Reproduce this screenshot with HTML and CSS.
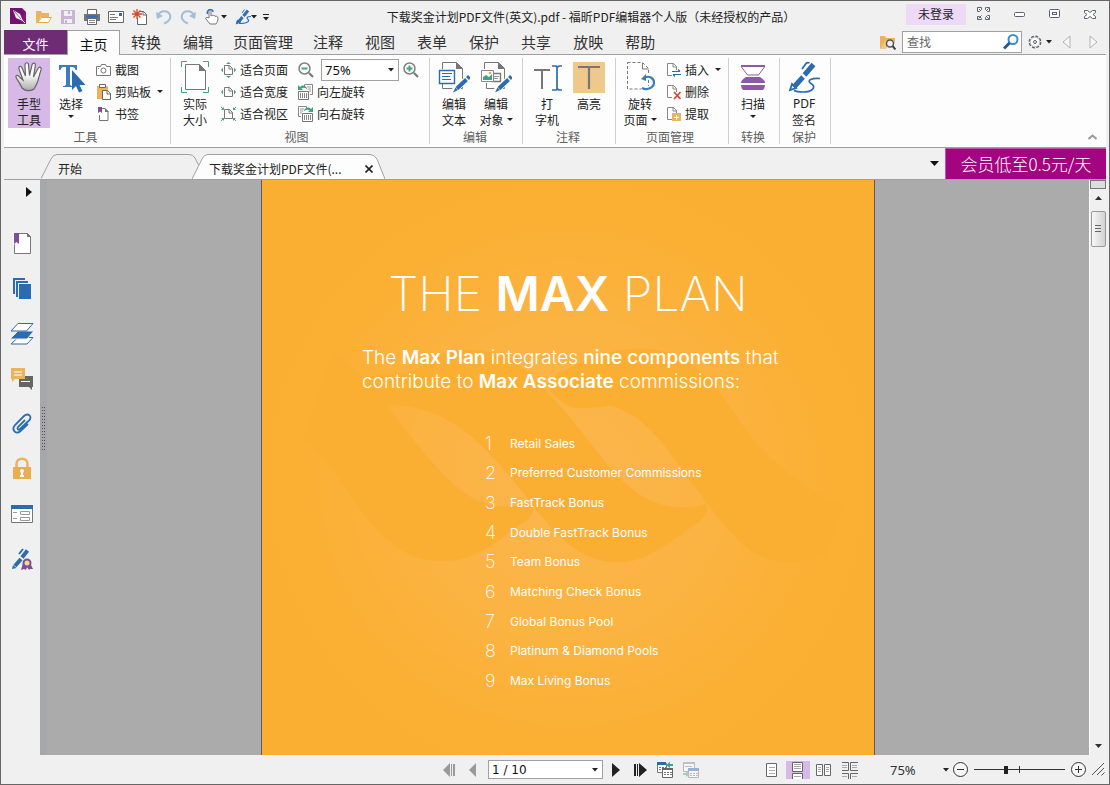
FILE: index.html
```html
<!DOCTYPE html>
<html lang="zh-CN">
<head>
<meta charset="utf-8">
<title>福昕PDF编辑器个人版</title>
<link rel="stylesheet" href="styles.css">
</head>
<body>
<div class="window">
  <header class="titlebar">
    <div class="quick">
      <svg class="logo" width="18" height="17" viewBox="0 0 18 17"><rect y="0" width="16" height="16" fill="#8a1285"/><path d="M0 0H16L10 16H0Z" fill="#74106f"/><path d="M12 0h4v4z" fill="#f3e3f3"/><path d="M3 2L10 6 13 13 6 10Z" fill="#fff"/><path d="M4 3L11 11" stroke="#74106f" stroke-width=".7"/><path d="M12 12l3 3" stroke="#fff"/></svg>
      <button aria-label="打开"><svg width="16" height="16" viewBox="0 0 16 16"><path d="M0 14V2h5l1 2h7v4H5L1 14Z" fill="#e9b45c"/><path d="M5.500 8.500H15.300L12.500 13.500H1.800Z" fill="#fff" stroke="#e9a93f"/></svg></button>
      <button aria-label="保存"><svg width="16" height="16" viewBox="0 0 16 16"><path d="M1 1h14v14H1z" fill="#c9b3d6"/><path d="M4 2h8v5H4z" fill="#f0f0f0"/><path d="M4 10h8v4H4z" fill="#f0f0f0"/><path d="M8 2h2v3H8zM5 11h2v3H5z" fill="#c9b3d6"/></svg></button>
      <button aria-label="打印"><svg width="16" height="16" viewBox="0 0 16 16"><path d="M3.500 5V.5h9V5" fill="#fff" stroke="#666"/><path d="M0 5h16v7H0z" fill="#777"/><path d="M2 6.500h12v2H2z" fill="#2e6db4"/><path d="M3.500 9.500h9v6h-9z" fill="#fff" stroke="#666"/><path d="M5 11.500h6M5 13.500h6" stroke="#888"/></svg></button>
      <button aria-label="邮件"><svg width="16" height="16" viewBox="0 0 16 16"><path d="M.5 2.500h15v11H.5z" fill="#fff" stroke="#666"/><path d="M11 4h3v3h-3z" fill="#2e6db4"/><path d="M2 5.500h5M2 8.500h8M2 10.500h6" stroke="#777"/></svg></button>
      <button aria-label="新建"><svg width="16" height="16" viewBox="0 0 16 16"><path d="M5.500 8.500v7h9V5.500l-3-3H8" fill="#fff" stroke="#666"/><path d="M11 2v4h4" fill="none" stroke="#666"/><path d="M5 0v10M0 5h10M1.500 1.500l7 7M8.500 1.500l-7 7" stroke="#cf4a2c" stroke-width="1.300"/></svg></button>
      <button aria-label="撤消"><svg width="16" height="16" viewBox="0 0 16 16"><path d="M2 6C5 1 12 1 14 6c1 4-2 7-6 8.500" fill="none" stroke="#a3bcda" stroke-width="2"/><path d="M0 3l1 7 6-3z" fill="#a3bcda"/></svg></button>
      <button aria-label="重做"><svg width="16" height="16" viewBox="0 0 16 16"><path d="M14 6C11 1 4 1 2 6c-1 4 2 7 6 8.500" fill="none" stroke="#a3bcda" stroke-width="2"/><path d="M16 3l-1 7-6-3z" fill="#a3bcda"/></svg></button>
      <button aria-label="触摸模式"><svg width="24" height="16" viewBox="0 0 24 16"><path d="M5 9V2c0-2 2-2 2 0v5c1-1 2-1 2 0 1-1 2-.5 2 .500 1-1 3 0 3 1.500 0 3-1 4-2 6H6L2 10c-1-1.500 1-2 3-1Z" fill="#fff" stroke="#777"/><path d="M3.500 5C2 0 9-1 9 3" fill="none" stroke="#2e6db4" stroke-width="1.400"/><path d="M17 6h6l-3 3.500z" fill="#222"/></svg></button>
      <button aria-label="签名"><svg width="24" height="16" viewBox="0 0 24 16"><path d="M12 1.500L7.500 7M6.500 8L3 12.500" stroke="#2e6db4" stroke-width="3"/><path d="M0 15l1.500-4 3 2zM6 4l2.500-3.500" stroke="#2e6db4" fill="#2e6db4"/><path d="M15 7.500c-4 0-5 1-3 3s-1 4-9 4" fill="none" stroke="#2e6db4" stroke-width="1.200"/><path d="M15 6h6l-3 3.500z" fill="#222"/></svg></button>
      <button class="custom" aria-label="自定义快速访问"><svg width="8" height="16" viewBox="0 0 8 16"><path d="M1 5.500h6" stroke="#222"/><path d="M1 8h6L4 11.500z" fill="#222"/></svg></button>
    </div>
    <h1 class="caption">下载奖金计划PDF文件(英文).pdf - 福昕PDF编辑器个人版（未经授权的产品）</h1>
    <button class="login">未登录</button>
    <div class="wincontrols">
      <button aria-label="全屏"><svg width="14" height="14" viewBox="0 0 14 14" fill="#fff" stroke="#5c6074"><path d="M.5.500h4v2l-2 2h-2zM2 2l2 2M9.500.500h3v4h-2l-2-2v-2zM.5 9.500h2l2 2v1h-4zM10.500 8.500h2v4h-4v-2zM9.500 3.500l2-2M1.500 11.500l3-3M9 9l3 3"/></svg></button>
      <button aria-label="最小化"><svg width="12" height="14" viewBox="0 0 12 14"><rect x=".5" y="5.500" width="10" height="4" rx="1" fill="#fff" stroke="#5c6074"/></svg></button>
      <button aria-label="还原"><svg width="12" height="14" viewBox="0 0 12 14" fill="#fff" stroke="#5c6074"><rect x=".5" y="2.500" width="10" height="8" rx="1"/><rect x="3.500" y="5.500" width="4" height="2"/></svg></button>
      <button aria-label="关闭"><svg width="12" height="14" viewBox="0 0 12 14"><path d="M.5 3.500h3l2.500 2 2.500-2h3v2L9 7.500l2.500 2v2h-3l-2.500-2-2.500 2h-3v-2l2.500-2-2.500-2z" fill="#fff" stroke="#5c6074"/></svg></button>
    </div>
  </header>

  <nav class="menu">
    <button class="file">文件</button>
    <button class="active">主页</button>
    <button>转换</button>
    <button>编辑</button>
    <button class="long">页面管理</button>
    <button>注释</button>
    <button>视图</button>
    <button>表单</button>
    <button>保护</button>
    <button>共享</button>
    <button>放映</button>
    <button>帮助</button>
    <div class="find">
      <button aria-label="搜索文件夹"><svg width="16" height="16" viewBox="0 0 16 16"><path d="M0 15V2h5l1 2h9v5l-4-3-5 1-4 6z" fill="#e9b45c"/><path d="M0 15L5 7h6l-5 8z" fill="#f0c684"/><circle cx="10" cy="9.500" r="3.500" fill="#eef" stroke="#555" stroke-width="1.500"/><path d="M12.500 12l3 3.500" stroke="#444" stroke-width="2"/></svg></button>
      <label class="searchbox"><input type="text" placeholder="查找" aria-label="查找"><svg width="16" height="16" viewBox="0 0 16 16"><circle cx="10" cy="5.500" r="4.500" fill="#fff" stroke="#3f8cc4" stroke-width="2"/><path d="M6.500 9L1 14.500" stroke="#2c5494" stroke-width="3"/></svg></label>
      <button aria-label="设置"><svg width="24" height="16" viewBox="0 0 24 16"><circle cx="7" cy="8" r="5.800" fill="#fff" stroke="#555a66" stroke-width="1.200" stroke-dasharray="3 1.500"/><circle cx="7" cy="8" r="4.800" fill="none" stroke="#888" stroke-width=".6"/><circle cx="7" cy="8" r="1.500" fill="none" stroke="#555a66"/><path d="M18 6h6l-3 3.500z" fill="#222"/></svg></button>
      <button class="step" aria-label="上一个"><svg width="9" height="14" viewBox="0 0 9 14"><path d="M8 1v12L1 7z" fill="#f7f7f7" stroke="#b3b3bb"/></svg></button>
      <button class="step" aria-label="下一个"><svg width="9" height="14" viewBox="0 0 9 14"><path d="M1 1v12l7-6z" fill="#f7f7f7" stroke="#b3b3bb"/></svg></button>
    </div>
  </nav>

  <div class="ribbon">
    <section class="group tools">
      <div class="items">
        <button class="big on"><svg width="32" height="32" viewBox="0 0 32 32"><defs><linearGradient id="palm" x2="0" y2="1"><stop offset=".4" stop-color="#fff"/><stop offset="1" stop-color="#aaa"/></linearGradient></defs><path d="M9 27C7 22 4 19 3 16c-.5-2 2-2.500 4 .500L10 19 6 8c-.8-3 2.200-3.500 3-1l3.500 8L12 4c0-3 3.500-3 3.500 0l1 10.500L19 4c.6-3 4-2 3.300.500L20.500 16 25 7.500c1.500-2.500 4-1 3 1.500C26 14 26 18 24 22c-1 3-2 4-3 6-3 2.500-9 2-12-1Z" fill="url(#palm)" stroke="#666" stroke-width="1.200"/></svg><span>手型</span><span>工具</span></button>
        <button class="big"><svg width="32" height="32" viewBox="0 0 32 32"><path d="M4 4h18v5h-1.500c-.5-2-1.500-3-3-3H15v17c0 1.500 1 2 3 2v1H8v-1c2 0 3-.5 3-2V6H8.500C7 6 6 7 5.500 9H4z" fill="#3b7cbd"/><path d="M17 9v20l4-4 3 6.500 3.500-1.500-3-6h6z" fill="#2b6bb0"/></svg><span>选择</span><svg class="arrow" width="6" height="10" viewBox="0 0 6 10"><path d="M0 3h6L3 6z" fill="#222"/></svg></button>
        <div class="stack">
          <button class="small"><svg width="15" height="16" viewBox="0 0 15 16"><path d="M.5 4.500h4l1-2h4l1 2h4v9H.5z" fill="#fff" stroke="#777"/><circle cx="7.500" cy="8.500" r="2.500" fill="none" stroke="#777"/><path d="M2 6.500h1" stroke="#777"/></svg>截图</button>
          <button class="small"><svg width="15" height="16" viewBox="0 0 15 16"><path d="M1 2h11v13H1z" fill="#e9b45c"/><path d="M3.500 0.500h6v3h-6z" fill="#fff" stroke="#666"/><path d="M6.500 6.500h5l3 3v6h-8z" fill="#fff" stroke="#666"/><path d="M11 6v4h4" fill="none" stroke="#666"/></svg>剪贴板<svg class="drop" width="6" height="10" viewBox="0 0 6 10"><path d="M0 3h6L3 6z" fill="#222"/></svg></button>
          <button class="small"><svg width="15" height="16" viewBox="0 0 15 16"><path d="M5 2.500h4l3 3v9H3.500V9" fill="#fff" stroke="#777"/><path d="M9 2l4 4H9z" fill="#777"/><path d="M2 1h4v6L4 5.500 2 7z" fill="#7d4d9a"/></svg>书签</button>
        </div>
      </div>
      <h2>工具</h2>
    </section>

    <section class="group view">
      <div class="items">
        <button class="big"><svg width="32" height="32" viewBox="0 0 32 32"><path d="M6.500 3.500h14l6 6v19h-20z" fill="#fff" stroke="#777"/><path d="M20 3l7 7h-7z" fill="#777"/><path d="M2.500 6V.5H8M24 .5h5.500V6M2.500 26v5.500H8M24 31.500h5.500V26" fill="none" stroke="#45a183"/></svg><span>实际</span><span>大小</span></button>
        <div class="stack">
          <button class="small"><svg width="15" height="16" viewBox="0 0 15 16"><path d="M3.500 3.500h5l3 3v6h-8z" fill="#fff" stroke="#777"/><path d="M8 3v4h4" fill="none" stroke="#777"/><path d="M5 2l2.500-2L10 2zM5 14l2.500 2 2.500-2zM2 5.500L0 8l2 2.500zM13 5.500L15 8l-2 2.500z" fill="#45a183"/></svg>适合页面</button>
          <button class="small"><svg width="15" height="16" viewBox="0 0 15 16"><path d="M3.500 3.500h5l3 3v6h-8z" fill="#fff" stroke="#777"/><path d="M8 3v4h4" fill="none" stroke="#777"/><path d="M2 5.500L0 8l2 2.500zM13 5.500L15 8l-2 2.500z" fill="#45a183"/></svg>适合宽度</button>
          <button class="small"><svg width="15" height="16" viewBox="0 0 15 16"><path d="M3.500 3.500h5l3 3v6h-8z" fill="#fff" stroke="#777"/><path d="M8 3v4h4" fill="none" stroke="#777"/><path d="M0 1l2.500 2.500M15 1l-2.500 2.500M0 15l2.500-2.500M15 15l-2.500-2.500M2.500 1.500v2H.5M12.500 1.500v2h2M2.500 14.500v-2H.5M12.500 14.500v-2h2" fill="none" stroke="#45a183"/></svg>适合视区</button>
        </div>
        <div class="stack second">
          <div class="zoomrow">
            <button aria-label="缩小"><svg width="16" height="16" viewBox="0 0 16 16"><circle cx="6.500" cy="6.500" r="5.500" fill="#fff" stroke="#808080" stroke-width="1.500"/><path d="M11 11l4 4" stroke="#777" stroke-width="2.200"/><path d="M3.500 6.500h6" stroke="#45a183" stroke-width="2"/></svg></button>
            <div class="combo zoombox"><select aria-label="缩放比例"><option>75%</option></select><svg width="6" height="4" viewBox="0 0 6 4"><path d="M0 0h6L3 3.500z" fill="#222"/></svg></div>
            <button aria-label="放大"><svg width="16" height="16" viewBox="0 0 16 16"><circle cx="6.500" cy="6.500" r="5.500" fill="#fff" stroke="#808080" stroke-width="1.500"/><path d="M11 11l4 4" stroke="#777" stroke-width="2.200"/><path d="M3.500 6.500h6M6.500 3.500v6" stroke="#45a183" stroke-width="2"/></svg></button>
          </div>
          <button class="small"><svg width="15" height="16" viewBox="0 0 15 16"><path d="M6.500 3V.5h8v10H12" fill="#fff" stroke="#888"/><path d="M9 3h4M10 5h3M11 7h2" stroke="#999"/><path d="M.5 7.500h10v8H.5z" fill="#fff" stroke="#777"/><path d="M2.500 9v5M4.500 9v5M6.500 9v5M8.500 9v5" stroke="#888"/><path d="M0 1v5h5L3.500 4.500C6 3 8 4 9.500 6 9 2 5 0 2 3z" fill="#45a183"/></svg>向左旋转</button>
          <button class="small"><svg width="15" height="16" viewBox="0 0 15 16"><path d="M8.500 3V.5h-8v10H3" fill="#fff" stroke="#888"/><path d="M2 3h4M2 5h3M2 7h2" stroke="#999"/><path d="M4.500 7.500h10v8h-10z" fill="#fff" stroke="#777"/><path d="M6.500 9v5M8.500 9v5M10.500 9v5M12.500 9v5" stroke="#888"/><path d="M15 1v5h-5l1.500-1.500C9 3 7 4 5.500 6 6 2 10 0 13 3z" fill="#45a183"/></svg>向右旋转</button>
        </div>
      </div>
      <h2>视图</h2>
    </section>

    <section class="group">
      <div class="items">
        <button class="big"><svg width="32" height="32" viewBox="0 0 32 32"><path d="M4.500 8V1.500h14l6 6v20h-20V22" fill="#fff" stroke="#777"/><path d="M18 1l7 7h-7z" fill="#777"/><path d="M1.500 9.500h15v13h-15z" fill="#fff" stroke="#2b6bb0" stroke-width="1.400"/><path d="M4 12.500h10M4 15.500h8M4 18.500h9" stroke="#2b6bb0"/><path d="M32 15L16 30" stroke="#fdfdfd" stroke-width="6"/><path d="M31.500 15.500L29.500 17.500M28.500 18.500L19 27.500" stroke="#2b6bb0" stroke-width="4"/><path d="M17.500 26.500l2.500 2.500-5 2.500z" fill="#2b6bb0"/></svg><span>编辑</span><span>文本</span></button>
        <button class="big"><svg width="32" height="32" viewBox="0 0 32 32"><path d="M4.500 8V1.500h14l6 6v20h-18V22" fill="#fff" stroke="#777"/><path d="M18 1l7 7h-7z" fill="#777"/><path d="M12.500 12.500h8v8h-8z" fill="#fff" stroke="#777" stroke-width="1.400"/><path d="M14 15.500h5M14 17.500h4" stroke="#999"/><path d="M1.500 9.500h12v11h-12z" fill="#fff" stroke="#888"/><path d="M3 19v-3l3-2 3 2 3-3v6z" fill="#45a183"/><circle cx="10" cy="12" r="1.300" fill="#e9a93f"/><path d="M32 15L16 30" stroke="#fdfdfd" stroke-width="6"/><path d="M31.500 15.500L29.500 17.500M28.500 18.500L19 27.500" stroke="#2b6bb0" stroke-width="4"/><path d="M17.500 26.500l2.500 2.500-5 2.500z" fill="#2b6bb0"/></svg><span>编辑</span><span class="witharrow">对象<svg width="6" height="6" viewBox="0 0 6 6"><path d="M0 1h6L3 4z" fill="#222"/></svg></span></button>
      </div>
      <h2>编辑</h2>
    </section>

    <section class="group">
      <div class="items">
        <button class="big"><svg width="32" height="32" viewBox="0 0 32 32"><path d="M3 9h16M11 9v19" stroke="#777" stroke-width="2"/><path d="M21 5h4l1.500 1L28 5h3M21 29h4l1.500-1 1.500 1h3M26 6v22" fill="none" stroke="#2b6bb0" stroke-width="1.700"/></svg><span>打</span><span>字机</span></button>
        <button class="big"><svg width="32" height="32" viewBox="0 0 32 32"><path d="M0 1h32v31H0z" fill="#efc88c"/><path d="M5 6h22M16 6v22" stroke="#777" stroke-width="2.200"/></svg><span>高亮</span></button>
      </div>
      <h2>注释</h2>
    </section>

    <section class="group pages">
      <div class="items">
        <button class="big"><svg width="32" height="32" viewBox="0 0 32 32"><path d="M3.500 1.500h15l6 6v20.500h-21z" fill="#fff" stroke="#777" stroke-dasharray="3 2"/><path d="M18.500 2v6h6" fill="none" stroke="#777"/><path d="M20 17c5-3 10 0 10 4.500S24 30 18 27" fill="none" stroke="#fdfdfd" stroke-width="5"/><path d="M20 17c5-3 10 0 10 4.500S24 30 18 27" fill="none" stroke="#3b7cbd" stroke-width="2.200"/><path d="M17 18l5-5v7z" fill="#3b7cbd"/></svg><span>旋转</span><span class="witharrow">页面<svg width="6" height="6" viewBox="0 0 6 6"><path d="M0 1h6L3 4z" fill="#222"/></svg></span></button>
        <div class="stack">
          <button class="small"><svg width="15" height="16" viewBox="0 0 15 16"><path d="M6 13.500H1.500V1.500h6l3 3V8" fill="#fff" stroke="#888"/><path d="M7 1v4h4" fill="none" stroke="#888"/><path d="M6 9.500h8M12 7.500l2 2M15 12.500H7M9 14.500l-2-2" fill="none" stroke="#2b6bb0" stroke-width="1.200"/></svg>插入<svg class="drop" width="6" height="10" viewBox="0 0 6 10"><path d="M0 3h6L3 6z" fill="#222"/></svg></button>
          <button class="small"><svg width="15" height="16" viewBox="0 0 15 16"><path d="M6 13.500H1.500V1.500h6l3 3V8" fill="#fff" stroke="#888"/><path d="M7 1v4h4" fill="none" stroke="#888"/><path d="M8 8l6.500 7M14.500 8L8 15" stroke="#d2492f" stroke-width="1.700"/></svg>删除</button>
          <button class="small"><svg width="15" height="16" viewBox="0 0 15 16"><path d="M6 13.500H1.500V1.500h6l3 3V8" fill="#fff" stroke="#888"/><path d="M7 1v4h4" fill="none" stroke="#888"/><path d="M6 7h9v8H6z" fill="#e9b45c"/><path d="M8 11.500h5M10.500 9v5" stroke="#fff"/></svg>提取</button>
        </div>
      </div>
      <h2>页面管理</h2>
    </section>

    <section class="group">
      <div class="items">
        <button class="big"><svg width="32" height="32" viewBox="0 0 32 32"><path d="M4 5h24" stroke="#8a5aa8" stroke-width="2"/><path d="M4.500 6l6 8h11l6-8" fill="#fff" stroke="#8a5aa8"/><path d="M9 16h14q5 3 5 6H4q0-3 5-6zM4 24h24q0 3-2 5H6q-2-2-2-5z" fill="#8a5aa8"/></svg><span>扫描</span><svg class="arrow" width="6" height="10" viewBox="0 0 6 10"><path d="M0 3h6L3 6z" fill="#222"/></svg></button>
      </div>
      <h2>转换</h2>
    </section>

    <section class="group">
      <div class="items">
        <button class="big"><svg width="32" height="32" viewBox="0 0 32 32"><path d="M25.500 3.500L16.500 14M15 16L6 26" stroke="#2b6bb0" stroke-width="5"/><path d="M4 23l4 4-6 2zM14 8l4-5.500q1.500-1.500 3.500-.5" fill="none" stroke="#2b6bb0" stroke-width="1.800"/><path d="M32 17.500C24 17 18 19 23 22.500C29 26 24 31 15 31Q9 31 6 29.500" fill="none" stroke="#2b6bb0" stroke-width="1.700"/></svg><span class="latin">PDF</span><span>签名</span></button>
      </div>
      <h2>保护</h2>
    </section>
    <button class="fold" aria-label="折叠功能区"><svg width="9" height="6" viewBox="0 0 9 6"><path d="M.5 5L4.500 1.500 8.500 5" fill="none" stroke="#999" stroke-width="2"/></svg></button>
  </div>

  <div class="doctabs">
    <button class="tab home"><svg width="160" height="25" viewBox="0 0 160 25"><path d="M0 24.500L10 5Q12 .5 16 .5H148Q152 .5 154 4L160 16V25H0" fill="#f0f0f0"/><path d="M0 24.500L10 5Q12 .5 16 .5H148Q152 .5 154 4L160 16" fill="none" stroke="#a0a0a0"/></svg><span>开始</span></button>
    <div class="tab current"><svg width="193" height="25" viewBox="0 0 193 25"><path d="M0 25L10 5Q12 .5 17 .5H178Q182 .5 185 5L193 25" fill="#fdfdfd" stroke="#a0a0a0"/></svg><button>下载奖金计划PDF文件(...</button><button class="close" aria-label="关闭标签"><svg width="8" height="8" viewBox="0 0 8 8"><path d="M.5.500l7 7M7.500.500l-7 7" stroke="#222" stroke-width="1.600"/></svg></button></div>
    <button class="more" aria-label="标签列表"><svg width="9" height="5" viewBox="0 0 9 5"><path d="M0 0h9L4.500 5z" fill="#111"/></svg></button>
    <a class="promo" href="#">会员低至0.5元/天</a>
  </div>

  <main class="work">
    <nav class="side">
      <button class="expand" aria-label="展开"><svg width="6" height="10" viewBox="0 0 6 10"><path d="M0 0v10l6-5z" fill="#111"/></svg></button>
      <button aria-label="书签"><svg width="24" height="24" viewBox="0 0 24 24"><path d="M4.500 1.500h13l3 3v17h-16z" fill="#fff" stroke="#777"/><path d="M17 1v4h4z" fill="#777"/><path d="M3 1h6v13l-3-3-3 3z" fill="#fff"/><path d="M4 1h5v11l-2.500-2L4 12z" fill="#7d4d9a"/></svg></button>
      <button aria-label="页面"><svg width="24" height="24" viewBox="0 0 24 24"><path d="M4 17V2h11M7 20V5h11" fill="none" stroke="#2b6bb0" stroke-width="2"/><path d="M9 7h12v15H9z" fill="#2b6bb0"/></svg></button>
      <button aria-label="图层"><svg width="24" height="24" viewBox="0 0 24 24"><path d="M8 15.500h15l-6 6.500H1z" fill="#fff" stroke="#2b6bb0"/><path d="M8 9h16l-7 8H0z" fill="#2b6bb0" stroke="#f0f0f0"/><path d="M8 1.500h15L16.500 9H1z" fill="#fff" stroke="#2b6bb0"/></svg></button>
      <button aria-label="注释"><svg width="24" height="24" viewBox="0 0 24 24"><path d="M9 9h14v11h-1v3l-3-3H9z" fill="#666"/><path d="M11 14.500h9" stroke="#fff"/><path d="M1 1h14v11H5l-3 3v-3H1z" fill="#e9b45c"/><path d="M4 5h8M4 8h8" stroke="#fff"/></svg></button>
      <button aria-label="附件"><svg width="24" height="24" viewBox="0 0 24 24"><path d="M15 8l-7 7c-1.500 2 .5 3.500 2 2L19 8.500c4-4-1-8-5-4.500L5 13c-4 5 1 10 5.500 6L18 12" fill="none" stroke="#2b6bb0" stroke-width="1.800"/></svg></button>
      <button aria-label="安全"><svg width="24" height="24" viewBox="0 0 24 24"><path d="M6.500 12V7c0-7 11-7 11 0v5" fill="none" stroke="#e9b45c" stroke-width="2.500"/><path d="M3 10h18v12H3z" fill="#e9ae50"/><circle cx="12" cy="14" r="2" fill="#fff"/><path d="M10 19h4M12 14v5" stroke="#fff" stroke-width="2"/></svg></button>
      <button aria-label="表单"><svg width="24" height="24" viewBox="0 0 24 24"><path d="M1.500 3.500h21v17h-21z" fill="#fff" stroke="#777"/><path d="M1 3h22v4H1z" fill="#2b6bb0"/><path d="M3 10.500h4M3 16.500h4M10.500 9.500h9v3h-9zM10.500 15.500h9v3h-9z" fill="none" stroke="#999"/></svg></button>
      <button aria-label="数字签名"><svg width="24" height="24" viewBox="0 0 24 24"><path d="M17.500 3.500L12 10.500M11 12L5 19" stroke="#2b6bb0" stroke-width="4"/><path d="M3 18l3.500 3L2 22z" fill="#2b6bb0"/><path d="M9 7l4-5" stroke="#2b6bb0" stroke-width="2"/><path d="M13 16l-2 7 3-1 2 1 1-3 2 3 1-1h3l-3-6z" fill="#7d4d9a"/><circle cx="17" cy="16" r="4.500" fill="#7d4d9a"/><circle cx="17" cy="16" r="2.500" fill="#f3d98c"/></svg></button>
    </nav>
    <div class="splitter"><i></i></div>
    <div class="viewer">
      <article class="sheet">
        <svg class="watermark" viewBox="0 0 1560 1464" aria-hidden="true" fill="#fbaf32">
          <path d="M105 660C220 740 270 972 460 972C560 972 620 900 680 865Q700 835 680 825C560 850 500 820 320 575C260 500 220 460 180 440Z"/>
          <path d="M320 575L250 500 380 490Q550 370 690 500C740 555 770 580 860 700C960 830 1040 850 1130 825Q1145 845 1115 870C1010 950 960 975 910 975C800 975 740 890 690 830C570 670 470 570 320 575Z"/>
          <path d="M720 515Q1000 340 1150 520C1230 620 1260 720 1480 830L1440 960C1350 985 1290 975 1250 950Q1190 900 1135 825C1020 670 990 610 890 575Q830 585 790 580Q750 565 720 515Z"/>
        </svg>
        <h3>THE <b>MAX</b> PLAN</h3>
        <p>The <b>Max Plan</b> integrates <b class="medium">nine components</b> that<br>contribute to <b>Max Associate</b> commissions:</p>
        <ol>
          <li><span>1</span>Retail Sales</li>
          <li><span>2</span>Preferred Customer Commissions</li>
          <li><span>3</span>FastTrack Bonus</li>
          <li><span>4</span>Double FastTrack Bonus</li>
          <li><span>5</span>Team Bonus</li>
          <li><span>6</span>Matching Check Bonus</li>
          <li><span>7</span>Global Bonus Pool</li>
          <li><span>8</span>Platinum &amp; Diamond Pools</li>
          <li><span>9</span>Max Living Bonus</li>
        </ol>
      </article>
    </div>
    <div class="scroll">
      <div class="split"></div>
      <button aria-label="向上滚动"><svg width="7" height="4" viewBox="0 0 7 4"><path d="M0 4h7L3.500 0z" fill="#333"/></svg></button>
      <div class="thumb"><svg width="8" height="10" viewBox="0 0 8 10"><path d="M1 1.500h6M1 4.500h6M1 7.500h6" stroke="#666"/></svg></div>
      <button class="down" aria-label="向下滚动"><svg width="7" height="4" viewBox="0 0 7 4"><path d="M0 0h7L3.500 4z" fill="#333"/></svg></button>
    </div>
  </main>

  <footer class="status">
    <div class="pager">
      <button aria-label="首页"><svg width="12" height="14" viewBox="0 0 12 14" fill="#999"><path d="M7 0v14L0 7zM8 1h1v12H8zM10 1h2v12h-2z"/></svg></button>
      <button aria-label="上一页"><svg width="8" height="14" viewBox="0 0 8 14"><path d="M7 0v14L0 7z" fill="#999"/></svg></button>
      <div class="combo pagebox"><select aria-label="页码"><option>1 / 10</option></select><svg width="6" height="4" viewBox="0 0 6 4"><path d="M0 0h6L3 3.500z" fill="#222"/></svg></div>
      <button aria-label="下一页"><svg width="8" height="14" viewBox="0 0 8 14"><path d="M0 0v14l8-7z" fill="#222"/></svg></button>
      <button aria-label="末页"><svg width="13" height="14" viewBox="0 0 13 14" fill="#222"><path d="M0 1h2v12H0zM3 1h1v12H3zM5 0v14l8-7z"/></svg></button>
      <button aria-label="上一视图"><svg width="16" height="16" viewBox="0 0 16 16"><path d="M.5 1.500h9v9h-9z" fill="#fff" stroke="#777"/><path d="M0 0h9v3H0z" fill="#2b6bb0"/><path d="M2 5.500h7M2 7.500h7" stroke="#777" stroke-dasharray="2 1"/><path d="M5.500 6.500h10v9h-10z" fill="#fff" stroke="#666"/><path d="M5 6h11v2H5z" fill="#666"/><path d="M7 10.500h8M7 12.500h8" stroke="#777" stroke-dasharray="2 1"/><path d="M9 3l4-3v2h3v2h-3v2z" fill="#45a183"/></svg></button>
      <button aria-label="下一视图"><svg width="16" height="16" viewBox="0 0 16 16" opacity=".45"><path d="M.5.500h11v9H.5z" fill="#fff" stroke="#777"/><path d="M0 0h12v2H0zM2 4h7v1H2z" fill="#888"/><path d="M5.500 6.500h10v9h-10z" fill="#fff" stroke="#777"/><path d="M5 6h11v3H5z" fill="#2b6bb0"/><path d="M7 11.500h8M7 13.500h8" stroke="#777" stroke-dasharray="2 1"/><path d="M7 12l-4-3v2H0v2h3v2z" fill="#45a183"/></svg></button>
    </div>
    <div class="modes">
      <button aria-label="单页"><svg width="16" height="18" viewBox="0 0 16 18"><path d="M2.500 2.500h10v13h-10z" fill="#fff" stroke="#666"/><path d="M5 6.500h6M5 9.500h6M5 12.500h6" stroke="#aaa"/></svg></button>
      <button class="on" aria-label="连续"><svg width="16" height="18" viewBox="0 0 16 18"><path d="M2.500 1.500h10v9h-10zM2.500 18v-5.500h10V18" fill="#fff" stroke="#666"/><path d="M4 3.500h7M4 5.500h7M4 7.500h7M4 15.500h7" stroke="#aaa"/></svg></button>
      <button aria-label="双页"><svg width="16" height="18" viewBox="0 0 16 18"><path d="M.5 3.500h6v11h-6zM8.500 3.500h6v11h-6z" fill="#fff" stroke="#666"/><path d="M2 6.500h3M2 8.500h3M2 10.500h3M10 6.500h3M10 8.500h3M10 10.500h3" stroke="#aaa"/></svg></button>
      <button aria-label="连续双页"><svg width="16" height="18" viewBox="0 0 16 18"><path d="M0 1.500h6.500v8H0M16 1.500H8.500v8H16M0 12.500h6.500V18M16 12.500H8.500V18" fill="none" stroke="#666"/><path d="M0 4.500h5M0 6.500h5M10 4.500h5M10 6.500h5M0 15.500h5M10 15.500h5" stroke="#aaa"/></svg></button>
    </div>
    <button class="percent"><span>75%</span><svg width="6" height="4" viewBox="0 0 6 4"><path d="M0 0h6L3 3.500z" fill="#222"/></svg></button>
    <div class="zoomer">
      <button aria-label="缩小"><svg width="15" height="15" viewBox="0 0 15 15"><circle cx="7.500" cy="7.500" r="7" fill="#f7f7f7" stroke="#333"/><path d="M4 7.500h7" stroke="#333"/></svg></button>
      <div class="slider"><input type="range" min="0" max="100" value="34" aria-label="缩放"><i></i></div>
      <button aria-label="放大"><svg width="15" height="15" viewBox="0 0 15 15"><circle cx="7.500" cy="7.500" r="7" fill="#f7f7f7" stroke="#333"/><path d="M4 7.500h7M7.500 4v7" stroke="#333"/></svg></button>
    </div>
    <svg width="13" height="13" viewBox="0 0 13 13"><path d="M0 12L12 0M5 12l7-7M9.500 12.500L12.500 9.500" stroke="#555"/></svg>
  </footer>
</div>
</body>
</html>
```
FILE: styles.css
```css
* { box-sizing: border-box; }
body {
  margin: 0;
  font: 12px/16px "Noto Sans CJK SC", sans-serif;
  color: #222;
  background: #f0f0f0;
}
button {
  border: 0;
  padding: 0;
  margin: 0;
  background: none;
  font: inherit;
  color: inherit;
}
svg { display: block; flex: none; }
h1, h2, h3, p, ol { margin: 0; padding: 0; font-weight: normal; }

.window {
  height: 100vh;
  display: flex;
  flex-direction: column;
  border: 1px solid #666;
  overflow: hidden;
}

/* title bar */
.titlebar {
  display: flex;
  align-items: center;
  height: 29px;
  flex: none;
  padding: 2px 13px 0 9px;
}
.quick { display: flex; align-items: center; gap: 8px; }
.custom { margin-left: -6px; }
.caption { flex: 1; text-align: center; font-size: 12px; white-space: nowrap; padding-left: 6px; }
.login { width: 60px; height: 21px; background: #ecdaf7; margin-bottom: 5px; }
.wincontrols { display: flex; align-items: center; gap: 23px; margin: 0 0 5px 11px; }

/* menu tabs */
.menu {
  display: flex;
  height: 24px;
  flex: none;
  margin: 0 3px;
  font-size: 15px;
  color: #333;
}
.menu > button { padding: 0 11px; white-space: nowrap; }
.menu > .long { padding: 0 9px; }
.menu > .file { width: 63px; font-size: 13px; background: #6d2c74; color: #fff; padding: 3px 0 0; }
.menu > .active {
  position: relative;
  z-index: 1;
  width: 53px;
  height: 25px;
  padding: 2px 0 0;
  font-size: 14px;
  color: #111;
  background: #fdfdfd;
  border: 1px solid #a0a0a0;
  border-bottom: 0;
}
.find { margin-left: auto; display: flex; align-items: center; padding-right: 8px; gap: 6px; }
.searchbox {
  display: flex;
  align-items: center;
  width: 120px;
  height: 22px;
  border: 1px solid #a0a0a0;
  background: #fff;
  padding-right: 2px;
}
.searchbox input {
  flex: 1;
  min-width: 0;
  border: 0;
  padding: 0 4px;
  font: inherit;
  font-size: 12px;
  background: none;
}
.searchbox input::placeholder { color: #666; opacity: 1; }
.step { margin-left: 4px; }
.step + .step { margin-left: 12px; }

/* ribbon */
.ribbon {
  position: relative;
  display: flex;
  flex: none;
  height: 94px;
  margin: 0 3px;
  padding: 3px 0;
  background: #fdfdfd;
  border-top: 1px solid #a0a0a0;
  border-bottom: 1px solid #a0a0a0;
}
.group { padding: 0 5px 0 3px; border-right: 1px solid #d0d0d0; }
.tools { padding: 0 7px 0 4px; }
.view { padding-right: 10px; }
.pages { padding-right: 7px; }
.items { display: flex; height: 70px; }
.group h2 { font-size: 12px; line-height: 17px; color: #606060; text-align: center; }
.big {
  width: 42px;
  height: 70px;
  display: flex;
  flex-direction: column;
  align-items: center;
  white-space: nowrap;
}
.big > svg:first-child { margin: 3px 0; }
.big.on { background: #d6b9e6; }
.witharrow { display: flex; align-items: center; gap: 3px; }
.latin { font-family: "Noto Sans", sans-serif; }
.stack { padding: 1px 0 0 4px; }
.view .stack, .pages .stack { padding-left: 5px; }
.view .second { padding-left: 10px; }
.small { display: flex; align-items: center; gap: 4px; height: 22px; white-space: nowrap; }
.drop { margin-left: 2px; }
.zoomrow { display: flex; align-items: center; height: 22px; }
.combo { position: relative; display: flex; background: #fff; border: 1px solid #a0a0a0; }
.combo select {
  appearance: none;
  width: 100%;
  border: 0;
  padding: 0 3px;
  background: none;
  color: #111;
  font: 12px/16px "DejaVu Sans", sans-serif;
}
.combo svg { position: absolute; right: 4px; top: 8px; pointer-events: none; }
.combo.zoombox { width: 78px; height: 22px; margin: 0 4px 0 7px; }
.zoombox select { font-family: "Noto Sans", sans-serif; font-size: 13px; }
.fold { position: absolute; right: 9px; bottom: 7px; }

/* document tabs */
.doctabs {
  display: flex;
  align-items: flex-end;
  flex: none;
  height: 32px;
  margin: 0 3px;
  padding-left: 37px;
  border-bottom: 1px solid #a0a0a0;
}
.tab { position: relative; height: 25px; display: flex; align-items: center; padding-top: 5px; white-space: nowrap; }
.tab > svg { position: absolute; left: 0; top: 0; }
.tab > span, .tab > button { position: relative; }
.home { width: 160px; padding-left: 17px; }
.current { width: 193px; margin-left: -9px; padding-left: 17px; padding-right: 11px; }
.close { margin-left: auto; margin-right: 1px; }
.more { margin-left: auto; align-self: center; margin-right: 6px; }
.promo {
  height: 31px;
  width: 161px;
  display: flex;
  align-items: center;
  justify-content: center;
  background: #a2057f;
  border-top: 1px solid #bb55a8;
  border-left: 1px solid #bb55a8;
  color: #fff;
  font-size: 17px;
  font-weight: 300;
  text-decoration: none;
  white-space: nowrap;
}

/* work area */
.work { flex: 1; min-height: 0; display: flex; padding-right: 3px; }
.side { width: 39px; display: flex; flex-direction: column; align-items: center; padding-left: 3px; }
.side button { height: 45px; width: 36px; display: flex; align-items: center; justify-content: center; }
.side .expand { height: 41px; align-items: flex-start; padding: 7px 0 0 14px; }
.splitter { width: 7px; background: #a5a7a8; display: flex; align-items: center; justify-content: center; }
.splitter i {
  width: 4px;
  height: 44px;
  margin-bottom: 78px;
  background: repeating-linear-gradient(to bottom, transparent 0 1px, #a5a7a8 1px 3px), repeating-linear-gradient(to right, #555 0 1px, transparent 1px 2px);
}
.viewer { flex: 1; min-width: 0; background: #ababab; display: flex; justify-content: center; overflow: hidden; }
.sheet {
  position: relative;
  width: 614px;
  flex: none;
  border: 1px solid #5b5b5b;
  border-width: 0 1px;
  color: #fff;
  font-family: Inter, "Liberation Sans", sans-serif;
  background: radial-gradient(circle at 50% 52%, #fbb54d 0, #fbb341 160px, #fbb034 260px, #fbaf32 300px);
}
.watermark { position: absolute; left: 0; top: 0; width: 100%; }
.sheet h3 { position: relative; margin-top: 84px; text-align: center; font-size: 48px; line-height: 60px; font-weight: 200; white-space: nowrap; }
.sheet h3 b { font-weight: 600; }
.sheet p { position: relative; margin: 22px 0 0 100px; font-size: 19px; line-height: 24px; font-weight: 300; white-space: nowrap; }
.sheet p b { font-weight: 600; }
.sheet p .medium { font-weight: 500; }
.sheet ol {
  position: relative;
  list-style: none;
  margin: 35px 0 0 223px;
  height: 267px;
  display: grid;
  grid-auto-rows: 1fr;
  font-size: 12px;
}
.sheet li { display: flex; align-items: center; white-space: nowrap; }
.sheet li span { width: 25px; font-size: 18px; font-weight: 200; }

.scroll { width: 17px; display: flex; flex-direction: column; align-items: center; background: #f0f0f0; border-left: 1px solid #fff; }
.split { width: 16px; height: 9px; border: 1px solid #777; background: #ddd; flex: none; }
.scroll button { height: 18px; width: 16px; display: flex; align-items: center; justify-content: center; }
.thumb {
  width: 15px;
  height: 36px;
  margin-top: 4px;
  border: 1px solid #999;
  border-radius: 2px;
  background: linear-gradient(to right, #f7f7f7, #d2d2d2);
  display: flex;
  align-items: center;
  justify-content: center;
}
.scroll .down { margin-top: auto; }

/* status bar */
.status { display: flex; align-items: center; flex: none; height: 29px; padding: 0 4px 0 10px; }
.pager { display: flex; align-items: center; margin-left: auto; }
.pager button { margin-right: 14px; }
.pager button:nth-child(2) { margin-right: 11px; }
.pagebox { width: 115px; height: 19px; margin-right: 9px; }
.pagebox svg { top: 7px; }
.pager button:nth-child(5), .pager button:nth-child(6) { margin-right: 10px; }
.modes { display: flex; margin: 0 28px 0 47px; gap: 2px; }
.modes button { width: 24px; height: 18px; display: flex; justify-content: center; }
.modes .on { background: #d6b9e6; }
.percent { display: flex; align-items: center; justify-content: space-between; width: 59px; font: 13px/16px "Noto Sans", sans-serif; color: #333; }
.zoomer { display: flex; align-items: center; margin: 0 6px 0 4px; gap: 6px; }
.slider { position: relative; display: flex; align-items: center; width: 91px; height: 15px; }
.slider input { appearance: none; width: 100%; height: 1px; margin: 0; background: #333; }
.slider input::-webkit-slider-thumb { appearance: none; width: 4px; height: 8px; background: #222; }
.slider i { position: absolute; left: 45px; top: 4px; width: 1px; height: 7px; background: #333; }
```
